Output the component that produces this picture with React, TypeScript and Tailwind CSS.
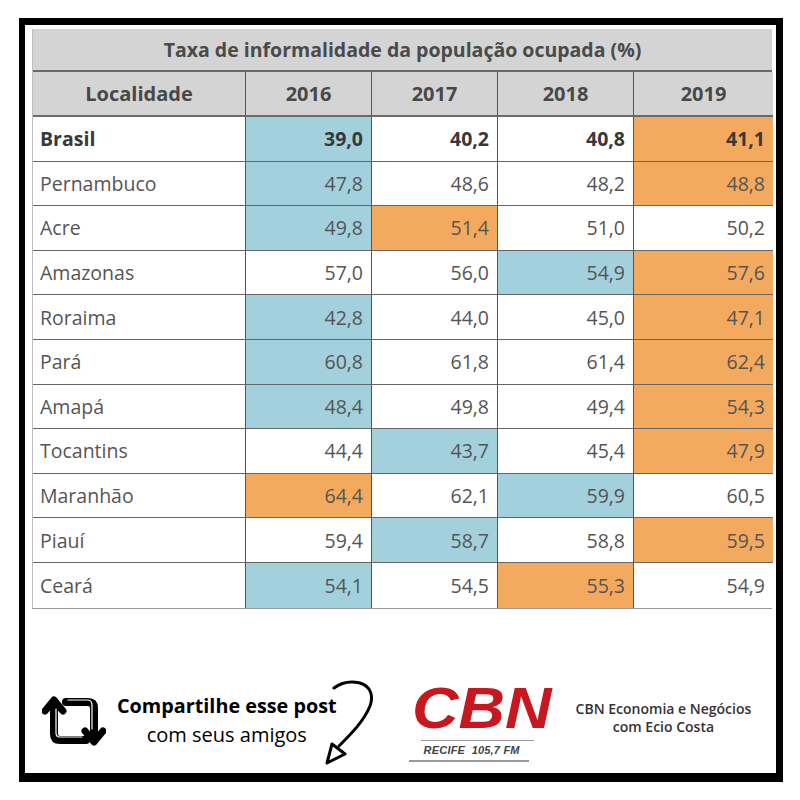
import React from "react";

type C = "b" | "o" | "w";
const rows: { name: string; vals: string[]; cols: C[]; bold?: boolean }[] = [
  { name: "Brasil", vals: ["39,0", "40,2", "40,8", "41,1"], cols: ["b", "w", "w", "o"], bold: true },
  { name: "Pernambuco", vals: ["47,8", "48,6", "48,2", "48,8"], cols: ["b", "w", "w", "o"] },
  { name: "Acre", vals: ["49,8", "51,4", "51,0", "50,2"], cols: ["b", "o", "w", "w"] },
  { name: "Amazonas", vals: ["57,0", "56,0", "54,9", "57,6"], cols: ["w", "w", "b", "o"] },
  { name: "Roraima", vals: ["42,8", "44,0", "45,0", "47,1"], cols: ["b", "w", "w", "o"] },
  { name: "Pará", vals: ["60,8", "61,8", "61,4", "62,4"], cols: ["b", "w", "w", "o"] },
  { name: "Amapá", vals: ["48,4", "49,8", "49,4", "54,3"], cols: ["b", "w", "w", "o"] },
  { name: "Tocantins", vals: ["44,4", "43,7", "45,4", "47,9"], cols: ["w", "b", "w", "o"] },
  { name: "Maranhão", vals: ["64,4", "62,1", "59,9", "60,5"], cols: ["o", "w", "b", "w"] },
  { name: "Piauí", vals: ["59,4", "58,7", "58,8", "59,5"], cols: ["w", "b", "w", "o"] },
  { name: "Ceará", vals: ["54,1", "54,5", "55,3", "54,9"], cols: ["b", "w", "o", "w"] },
];

const bg: Record<C, string> = {
  b: "bg-[#a2d0dc]",
  o: "bg-[#f4aa5e]",
  w: "bg-white",
};

const RetweetIcon = () => (
  <svg width="64" height="52" viewBox="0 0 64 52" fill="none">
    <path d="M12 12 V39 Q12 45 18 45 H44" stroke="#000" strokeWidth="8" strokeLinecap="round" strokeLinejoin="round" />
    <path d="M3 16 L12 5 L21 16" stroke="#000" strokeWidth="7" strokeLinecap="round" strokeLinejoin="round" />
    <path d="M24 7 H46 Q52 7 52 13 V38" stroke="#000" strokeWidth="8" strokeLinecap="round" strokeLinejoin="round" />
    <path d="M43 36 L52 47 L61 36" stroke="#000" strokeWidth="7" strokeLinecap="round" strokeLinejoin="round" />
    <path d="M14 14 V38 Q14 42 18 42 H40" stroke="#fff" strokeWidth="1.2" strokeLinecap="round" />
    <path d="M26 5 H45 Q50 5 50 10 V34" stroke="#fff" strokeWidth="1.2" strokeLinecap="round" />
  </svg>
);

const CurvedArrow = () => (
  <svg width="52" height="88" viewBox="0 0 52 88" fill="none">
    <path
      d="M10 9 C18 3 28 2 36 4 C46 7 50 16 46 27 C40 42 27 55 15 67"
      stroke="#000"
      strokeWidth="3"
      strokeLinecap="round"
      fill="none"
    />
    <path d="M8 65 L21 75 L3 84 Z" stroke="#000" strokeWidth="3" strokeLinejoin="round" fill="none" />
  </svg>
);

export default function App() {
  return (
    <div className="w-[800px] h-[800px] bg-white pt-[18px] pl-[19px]" style={{ fontFamily: "'Open Sans', sans-serif" }}>
      <div className="w-[764px] h-[764px] border-black border-l-[6px] border-t-[7px] border-r-[7px] border-b-[9px] flex flex-col">
        <div className="pt-[4px] pl-[7px]">
          <div className="w-[740px] border-l border-l-[#bdbdbd] border-b border-b-[#9a9a9a]">
            <div className="h-[43px] bg-[#d4d4d4] border-b-2 border-b-[#6a6a6a] flex items-center justify-center text-[19.5px] font-bold text-[#4a4a4a]">
              Taxa de informalidade da população ocupada (%)
            </div>
            <div className="grid grid-cols-[213px_126px_126px_136px_139px]">
              {["Localidade", "2016", "2017", "2018", "2019"].map((h, i) => (
                <div
                  key={h}
                  className={`h-[45px] bg-[#d4d4d4] border-b-2 border-b-[#6a6a6a] flex items-center justify-center text-[20px] font-bold text-[#484848] ${i < 4 ? "border-r border-r-[#555]" : ""}`}
                >
                  {h}
                </div>
              ))}
              {rows.map((r, ri) => (
                <React.Fragment key={r.name}>
                  <div
                    className={`h-[44.6px] bg-white flex items-center pl-[7px] text-[19.5px] border-r border-r-[#555] ${ri < rows.length - 1 ? "border-b border-b-[#666]" : ""} ${r.bold ? "font-bold text-[#383838]" : "text-[#555]"}`}
                  >
                    {r.name}
                  </div>
                  {r.vals.map((v, vi) => (
                    <div
                      key={vi}
                      className={`h-[44.6px] ${bg[r.cols[vi]]} flex items-center justify-end pr-[8px] text-[19.5px] ${vi < 3 ? "border-r border-r-[#555]" : ""} ${ri < rows.length - 1 ? "border-b border-b-[#666]" : ""} ${r.bold ? "font-bold text-[#383838]" : "text-[#555]"}`}
                    >
                      {v}
                    </div>
                  ))}
                </React.Fragment>
              ))}
            </div>
          </div>
        </div>
        <div className="mt-[68px] h-[88px] flex items-center">
          <div className="ml-[17px]">
            <RetweetIcon />
          </div>
          <div className="ml-[11px] flex flex-col items-center leading-none">
            <div className="text-[19.8px] font-bold text-black">Compartilhe esse post</div>
            <div className="mt-[9px] text-[20px] text-black">com seus amigos</div>
          </div>
          <div className="ml-[-13px] self-start mt-[2px]">
            <CurvedArrow />
          </div>
          <div className="ml-[36px] w-[122px] flex flex-col items-start">
            <div
              className="text-[57px] leading-none font-black italic text-[#c8171e] origin-left scale-x-[1.13]"
              style={{ fontFamily: "'Liberation Sans', Arial, sans-serif" }}
            >
              CBN
            </div>
            <div className="w-[113px] h-[1.5px] bg-[#9a9a9a] mt-[3px] ml-[9px]" />
            <div
              className="ml-[12px] mt-[4px] text-[11px] leading-none font-bold italic text-[#444] tracking-[0.2px]"
              style={{ fontFamily: "'Liberation Sans', Arial, sans-serif" }}
            >
              RECIFE&nbsp;&nbsp;105,7 FM
            </div>
            <div className="w-[120px] h-[1.5px] bg-[#9a9a9a] mt-[4px] ml-[-3px]" />
          </div>
          <div className="ml-[42px] flex flex-col items-center text-[14px] font-semibold text-[#333] leading-[18px] mt-[-6px]">
            <div>CBN Economia e Negócios</div>
            <div>com Ecio Costa</div>
          </div>
        </div>
      </div>
    </div>
  );
}
